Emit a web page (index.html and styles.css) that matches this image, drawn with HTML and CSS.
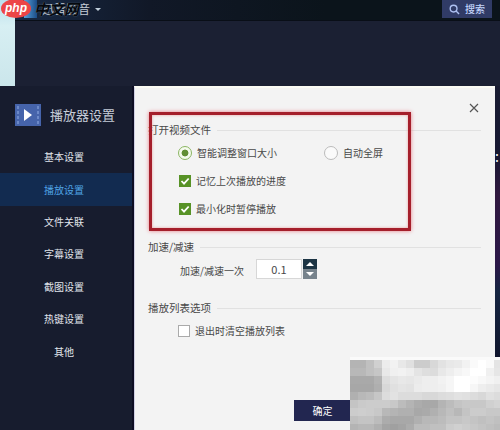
FILE: index.html
```html
<!DOCTYPE html>
<html lang="zh-CN">
<head><meta charset="utf-8"><title>播放器设置</title><link rel="stylesheet" href="styles.css"></head>
<body>
<main class="desktop">
  <header class="topbar">
    <div class="brand"><span>迅雷影音</span><i class="caret"></i></div>
    <button class="search"><svg viewBox="0 0 12 12"><circle cx="5" cy="5" r="3.7"/><path d="M7.7 7.7 11 11"/></svg><span>搜索</span></button>
  </header>
  <div class="bluepatch"></div>
  <div class="watermark">php</div>
  <div class="watermark-text">中文网</div>
  <div class="wallpaper"></div>
  <div class="edge"></div>
  <span class="behind">:</span>
  <section class="dialog">
    <aside class="sidebar">
      <div class="heading"><svg viewBox="0 0 26 22"><path fill="#4664ab" d="M0 0h26v22H0z"/><path fill="#6c89c8" d="M2 2h2v3H2zm0 5h2v3H2zm0 5h2v3H2zm0 5h2v3H2zM22 2h2v3h-2zm0 5h2v3h-2zm0 5h2v3h-2zm0 5h2v3h-2z"/><path fill="#fff" d="m9 5 8 6-8 6z"/></svg><span>播放器设置</span></div>
      <nav>
        <a>基本设置</a><a class="active">播放设置</a><a>文件关联</a><a>字幕设置</a><a>截图设置</a><a>热键设置</a><a>其他</a>
      </nav>
    </aside>
    <div class="panel">
      <svg class="close" viewBox="0 0 10 10"><path d="m1 1 8 8M9 1 1 9"/></svg>
      <fieldset class="files"><h2>打开视频文件</h2>
        <div class="row first"><label class="size"><i class="radio on"></i><span>智能调整窗口大小</span></label><label><i class="radio"></i><span>自动全屏</span></label></div>
        <div class="row"><label><svg class="check" viewBox="0 0 12 12"><path d="m2.5 6 2.5 2.7L9.7 3.5"/></svg><span>记忆上次播放的进度</span></label></div>
        <div class="row"><label><svg class="check" viewBox="0 0 12 12"><path d="m2.5 6 2.5 2.7L9.7 3.5"/></svg><span>最小化时暂停播放</span></label></div>
      </fieldset>
      <fieldset class="speed"><h2>加速/减速</h2>
        <div class="stepper"><span class="label">加速/减速一次</span><span class="value">0.1</span><span class="arrows"><i></i><i></i></span></div>
      </fieldset>
      <fieldset class="list"><h2>播放列表选项</h2>
        <label><i class="box"></i><span>退出时清空播放列表</span></label>
      </fieldset>
      <button class="ok">确定</button>
    </div>
  </section>
  <div class="highlight"></div>
  <div class="mosaic"></div>
</main>
<script src="mosaic.js"></script>
</body></html>
```
FILE: mosaic.js
```js
// Grey levels of the pixelated area, one row of cells per line.
const rows = [
  "b4 b4 c0 d0 ec f2 e8 e0 cc cc d8 e2 e8 ea f2 fa ff fa e4",
  "b8 b8 c0 c6 e8 f0 f2 ee e4 de dc e8 ee f4 f8 ff ff f0 e6",
  "a9 a9 a9 b2 dd e4 e8 e6 ea ee ee f2 f6 ff ff fc f8 f4 f0",
  "a7 a7 a7 af d8 e0 e4 e2 ec ee ee f0 f6 ff ff f6 ee ea e6",
  "b0 b8 bc c6 dc e2 dc dc dc d8 d8 dc de e2 e0 dc d8 e0 dc",
  "c4 ca cc cc cc c8 bc b4 ac a8 a8 b4 bc c4 c8 c8 c8 d0 d4",
  "cc ce cc c8 b8 b4 b0 b0 a8 aa b0 b8 c0 b8 c4 cc cc c8 c8",
  "c0 c4 c4 bc ac a8 a8 a8 b0 b8 b8 bc c4 c4 c8 c4 c0 c4 c0",
  "b4 b8 b8 b0 a4 a0 a4 ac bc bc c0 c0 cc d0 cc c8 c4 c0 bc"
];
const mosaic = document.querySelector(".mosaic");
rows.join(" ").split(" ").forEach(level => {
  const cell = document.createElement("i");
  cell.style.background = "#" + level.repeat(3);
  mosaic.append(cell);
});
```
FILE: styles.css
```css
* { box-sizing: border-box; }
body { margin: 0; font: 10px/14px "Noto Sans CJK SC", sans-serif; }
.desktop { position: relative; width: 500px; height: 430px; overflow: hidden; background: #1b2033; }
.topbar { display: flex; justify-content: space-between; height: 21px; padding: 0 8px 0 37px; background: linear-gradient(90deg, #182b48, #111827 30%, #0b141b 65%); border-bottom: 1px solid #090e17; }
.brand { display: flex; align-items: center; gap: 5px; height: 18px; color: #c4ccd5; font-size: 12px; padding-left: 5px; }
.caret { border: 3px solid transparent; border-top-color: #c1d0dc; border-bottom: 0; }
button { border: 0; padding: 0; font: inherit; }
.search { display: flex; align-items: center; justify-content: center; gap: 5px; width: 50px; height: 18px; color: #c2d3fa; background: #303b66; font-weight: 500; }
.search svg { width: 11px; height: 11px; fill: none; stroke: #adc0f1; stroke-width: 1.5; }
.bluepatch { position: absolute; left: 24px; top: 0; width: 13px; height: 18px; background: linear-gradient(90deg, #57a1dc, #1b4c87); }
.watermark { position: absolute; z-index: 4; left: 1px; top: -1px; width: 30px; height: 19px; border-radius: 50%; background: #ed4547; color: #fff; font: italic bold 12px/18px "Liberation Sans", sans-serif; text-align: center; }
.watermark-text { position: absolute; z-index: 3; left: 34px; top: 0; color: #05080d; font-size: 15px; line-height: 18px; font-weight: 700; font-style: italic; text-shadow: 0 0 1px #6d8292; }
.wallpaper { position: absolute; left: 0; top: 0; width: 15px; height: 86px; background: linear-gradient(#b9dfec, #d7eff3 30%, #cbe6eb); }
.edge { position: absolute; left: 495px; top: 86px; width: 5px; height: 274px; background: linear-gradient(#191c32, #171832 25%, #30183f 40%, #2b1748 65%, #152441 75%, #10152c); }
.behind { position: absolute; left: 495px; top: 149px; color: #fff; font-size: 14px; }
.dialog { position: absolute; left: 0; top: 86px; width: 495px; height: 344px; display: flex; }
.sidebar { width: 134px; background: #171c2e; border-right: 2px solid #0d0d23; }
.heading { display: flex; align-items: center; gap: 9px; height: 57px; padding-left: 15px; color: #c5ccd8; font-size: 13px; }
.heading svg { width: 26px; height: 22px; }
nav { display: flex; flex-direction: column; margin-top: -2px; }
nav a { height: 32.4px; display: flex; align-items: center; justify-content: center; color: #e0e4eb; padding-right: 4px; }
nav .active { background: #122b50; color: #50a4e5; }
.panel { position: relative; flex: 1; background: #f3f3f3; color: #484848; border-left: 1px solid #cfcfe3; border-top: 2px solid #fbfbf4; padding: 34px 14px 0 13px; }
.close { position: absolute; right: 16px; top: 15px; width: 10px; height: 10px; stroke: #555; stroke-width: 1.2; fill: none; }
fieldset { border: 0; margin: 0; padding: 0; min-width: 0; }
h2 { display: flex; align-items: center; gap: 6px; margin: 0; font-size: 10.5px; line-height: 16px; font-weight: 400; white-space: nowrap; }
h2::after { content: ""; flex: 1; height: 1px; background: #e1e1e1; }
.row { display: flex; height: 28px; padding-left: 31px; align-items: center; }
.row.first { margin-top: 1px; }
label { display: flex; align-items: center; gap: 5px; white-space: nowrap; }
.size { width: 146px; margin-left: -1px; }
.radio { width: 14px; height: 14px; border: 1px solid #bbb; border-radius: 50%; background: #fafafa; }
.radio.on { border-color: #8bb663; background: radial-gradient(circle, #628e35 0 3px, #f5faee 3.8px); }
.check { width: 12px; height: 12px; background: #579226; fill: none; stroke: #fff; stroke-width: 1.8; }
.files { height: 117px; }
.speed { height: 61px; }
.stepper { display: flex; align-items: center; padding-left: 32px; margin-top: 3px; height: 21px; }
.label { width: 76px; padding-top: 5px; white-space: nowrap; }
.value { width: 46px; height: 20px; border: 1px solid #d7d7d7; background: #fff; text-align: center; line-height: 18px; font-size: 11px; }
.arrows { width: 14px; height: 20px; margin-left: 1px; display: flex; flex-direction: column; }
.arrows i { height: 10px; background: #1c3444; display: flex; align-items: center; justify-content: center; }
.arrows i::after { content: ""; border: 4px solid transparent; border-top: 0; border-bottom-color: #fff; }
.arrows i + i { background: #77838c; transform: scaleY(-1); }
.list label { padding-left: 30px; margin-top: 8px; }
.box { width: 12px; height: 12px; border: 1px solid #aaa; background: #fff; }
.ok { position: absolute; left: 159px; top: 312px; width: 57px; height: 21px; background: #222650; color: #fff; }
.highlight { position: absolute; left: 149px; top: 112px; width: 262px; height: 119px; border: 3px solid #a51f2b; box-shadow: 0 0 4px #e77b86, inset 0 0 3px #e8a1a0; }
.mosaic { position: absolute; left: 350px; top: 360px; width: 152px; height: 72px; display: grid; grid-template-columns: repeat(19, 8px); grid-auto-rows: 8px; box-shadow: 0 -3px 0 #fafafa; }
```
